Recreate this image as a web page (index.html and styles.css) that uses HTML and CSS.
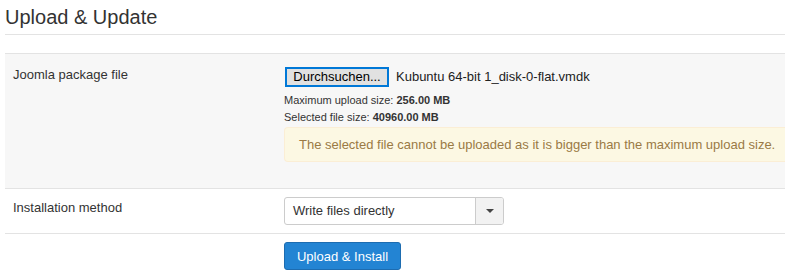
FILE: index.html
```html
<!DOCTYPE html>
<html lang="en">
<head>
    <meta charset="UTF-8">
    <meta name="viewport" content="width=device-width, initial-scale=1.0">
    <title>Upload &amp; Update</title>
    <link rel="stylesheet" href="styles.css">
</head>
<body>
    <div class="page">
        <h2 class="page-title">Upload &amp; Update</h2>

        <div class="form-row shaded">
            <div class="row-label">Joomla package file</div>
            <div class="row-controls">
                <div class="file-input">
                    <button type="button" class="browse-button">Durchsuchen...</button>
                    <span class="file-name">Kubuntu 64-bit 1_disk-0-flat.vmdk</span>
                </div>
                <p class="size-info">Maximum upload size: <strong>256.00 MB</strong></p>
                <p class="size-info">Selected file size: <strong>40960.00 MB</strong></p>
                <div class="alert">The selected file cannot be uploaded as it is bigger than the maximum upload size.</div>
            </div>
        </div>

        <div class="form-row method">
            <div class="row-label">Installation method</div>
            <div class="row-controls">
                <div class="select-box">
                    <span class="select-value">Write files directly</span>
                    <span class="select-arrow"><span class="caret"></span></span>
                </div>
            </div>
        </div>

        <div class="form-row actions">
            <div class="row-label"></div>
            <div class="row-controls">
                <button type="button" class="btn-primary">Upload &amp; Install</button>
            </div>
        </div>
    </div>
</body>
</html>
```

FILE: styles.css
```css
body {
    margin: 0;
    font-family: "Liberation Sans", Arial, sans-serif;
    font-size: 13px;
    color: #333;
    background: #fff;
    overflow: hidden;
}
.page {
    padding-left: 5px;
    width: 780px;
    overflow: hidden;
}
.page-title {
    margin: 0;
    padding-top: 4px;
    height: 30px;
    font-size: 20px;
    font-weight: normal;
    line-height: 26px;
    color: #333;
    border-bottom: 1px solid #e3e3e3;
    margin-bottom: 18px;
}
.form-row {
    display: flex;
    border-top: 1px solid #e3e3e3;
}
.shaded {
    background-color: #f7f7f7;
    padding: 12px 0 26px;
}
.row-label {
    width: 271px;
    padding-left: 8px;
    flex-shrink: 0;
}
.shaded .row-label {
    padding-top: 1px;
}
.row-controls {
    flex: 1;
    min-width: 0;
}
.file-input {
    display: flex;
    align-items: center;
    gap: 7px;
    height: 21px;
}
.browse-button {
    font-family: "Liberation Sans", Arial, sans-serif;
    font-size: 13px;
    color: #000;
    background-color: #e1e1e1;
    border: 2px solid #0078d7;
    height: 20px;
    width: 104px;
    padding: 0;
    margin-left: 1px;
}
.file-name {
    font-size: 13px;
    color: #222;
}
.size-info {
    margin: 0;
    font-size: 11px;
    line-height: 17px;
}
.size-info:first-of-type {
    margin-top: 5px;
}
.alert {
    margin-top: 1px;
    width: 520px;
    height: 33px;
    line-height: 33px;
    padding-left: 14px;
    background-color: #fcf8e3;
    border: 1px solid #fbeed5;
    border-right: none;
    border-radius: 4px 0 0 4px;
    color: #9a7a45;
    white-space: nowrap;
}
.method {
    padding: 8px 0 8px;
}
.method .row-label {
    padding-top: 3px;
}
.select-box {
    display: flex;
    width: 218px;
    height: 26px;
    border: 1px solid #ccc;
    border-radius: 3px;
    background: #fff;
    overflow: hidden;
}
.select-value {
    flex: 1;
    line-height: 26px;
    padding-left: 8px;
    color: #333;
}
.select-arrow {
    width: 27px;
    border-left: 1px solid #ccc;
    background: #f2f2f2;
    display: flex;
    align-items: center;
    justify-content: center;
}
.caret {
    width: 0;
    height: 0;
    border-left: 4px solid transparent;
    border-right: 4px solid transparent;
    border-top: 4px solid #444;
}
.actions {
    padding-top: 8px;
}
.btn-primary {
    font-family: "Liberation Sans", Arial, sans-serif;
    font-size: 13px;
    color: #fff;
    background-color: #2384d3;
    border: 1px solid #1d6cb0;
    border-radius: 3px;
    width: 117px;
    height: 28px;
    padding: 0;
}
```
